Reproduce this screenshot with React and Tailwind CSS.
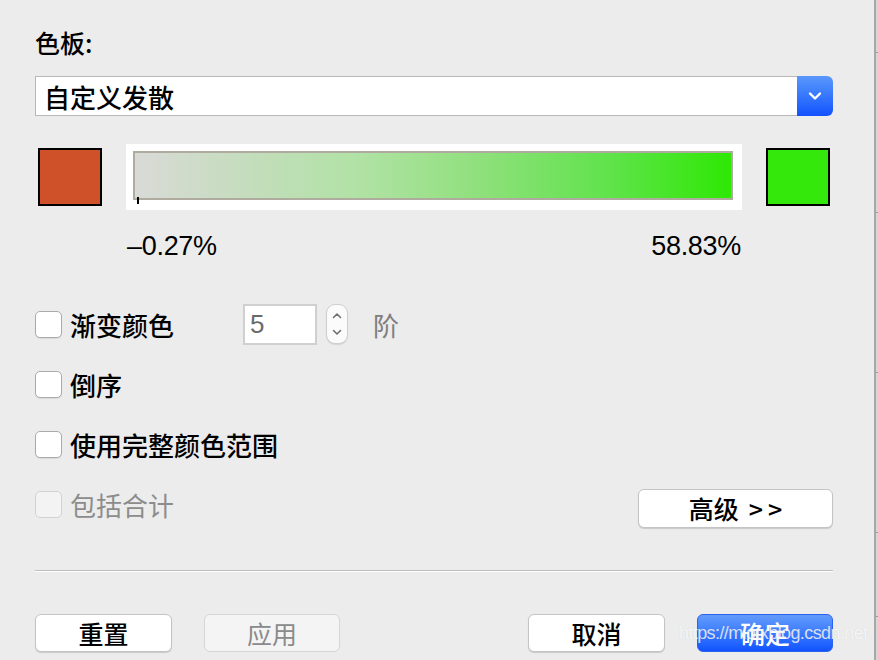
import React from "react";

const cjk = { fontFamily: '"Noto Sans CJK SC", "Noto Sans", sans-serif' };
const latin = { fontFamily: '"Liberation Sans", Arial, sans-serif' };

function Check({ disabled }) {
  return (
    <div
      className={
        "w-[27px] h-[27px] rounded-[5px] border shrink-0 " +
        (disabled
          ? "bg-[#f3f3f3] border-[#d2d2d2]"
          : "bg-white border-[#ababab] shadow-[0_1px_1px_rgba(0,0,0,0.08)]")
      }
    />
  );
}

function Btn({ children, variant }) {
  const base =
    "h-[38px] rounded-[6px] flex items-center justify-center text-[25px] leading-none ";
  let cls = "";
  if (variant === "primary")
    cls =
      "w-[136px] bg-gradient-to-b from-[#639bfb] to-[#1252ff] text-white border border-[#2b62f0] font-medium";
  else if (variant === "disabled")
    cls =
      "w-[136px] bg-[#f4f4f4] text-[#8a8a8a] border border-[#d6d6d6]";
  else
    cls =
      "w-[137px] bg-white text-black border border-[#c4c4c4] shadow-[0_1px_1px_rgba(0,0,0,0.15)] font-medium";
  return (
    <div className={base + cls} style={cjk}>
      {children}
    </div>
  );
}

export default function App() {
  return (
    <div className="w-[878px] h-[660px] flex bg-[#ececec] overflow-hidden relative">
      <div className="flex-1 flex flex-col px-[35px] pr-[41px]" style={cjk}>
        {/* Label */}
        <div className="mt-[27px] h-[30px] leading-[30px] text-[25px] text-black font-medium">
          色板:
        </div>

        {/* Select */}
        <div className="mt-[19px] h-[40px] flex">
          <div className="flex-1 bg-white border-y border-l border-[#b8b8b8] flex items-center pl-[8px] text-[26px] text-black font-medium">
            自定义发散
          </div>
          <div className="w-[36px] h-[40px] rounded-r-[6px] bg-gradient-to-b from-[#5a97fb] to-[#1450ff] flex items-center justify-center">
            <svg width="14" height="10" viewBox="0 0 14 10">
              <polyline
                points="2,2.5 7,7.5 12,2.5"
                fill="none"
                stroke="white"
                strokeWidth="2.4"
                strokeLinecap="round"
                strokeLinejoin="round"
              />
            </svg>
          </div>
        </div>

        {/* Color bar row */}
        <div className="mt-[28px] h-[66px] flex items-center">
          <div className="ml-[3px] w-[64px] h-[58px] bg-[#cf512a] border-2 border-black" />
          <div className="ml-[24px] w-[616px] h-[66px] bg-white pt-[7px] pl-[7px] relative">
            <div className="w-[600px] h-[49px] border-2 border-[#b0ab9f] bg-[linear-gradient(to_right,#d9dad7_0%,#c3ddbb_20%,#b0e2a4_38%,#8fe07c_58%,#5fe34a_80%,#2ee804_100%)]" />
            <div className="absolute left-[11px] top-[53px] w-[2px] h-[7px] bg-black" />
          </div>
          <div className="ml-[24px] w-[64px] h-[58px] bg-[#33e80a] border-2 border-black" />
        </div>

        {/* Percent labels */}
        <div
          className="mt-[20px] h-[32px] ml-[92px] w-[614px] flex justify-between items-center text-[27px] text-black tracking-[-0.3px]"
          style={latin}
        >
          <span>–0.27%</span>
          <span>58.83%</span>
        </div>

        {/* Checkbox rows */}
        <div className="mt-[42px] h-[40px] flex items-center">
          <Check />
          <div className="ml-[8px] w-[173px] text-[26px] text-black font-medium">渐变颜色</div>
          <div className="w-[74px] h-[41px] bg-white border-2 border-[#d0d0d0] flex items-center pl-[5px] text-[26px] text-[#6a6a6a]" style={latin}>
            5
          </div>
          <div className="ml-[9px] w-[22px] h-[40px] rounded-[9px] bg-[#fbfbfb] border border-[#cfcfcf] shadow-[0_1px_1px_rgba(0,0,0,0.1)] flex flex-col items-center justify-between py-[7px]">
            <svg width="10" height="7" viewBox="0 0 10 7">
              <polyline points="1.5,5.5 5,2 8.5,5.5" fill="none" stroke="#6f6f6f" strokeWidth="1.6" strokeLinecap="round" strokeLinejoin="round" />
            </svg>
            <svg width="10" height="7" viewBox="0 0 10 7">
              <polyline points="1.5,1.5 5,5 8.5,1.5" fill="none" stroke="#6f6f6f" strokeWidth="1.6" strokeLinecap="round" strokeLinejoin="round" />
            </svg>
          </div>
          <div className="ml-[25px] text-[26px] text-[#7f7f7f]">阶</div>
        </div>

        <div className="mt-[20px] h-[40px] flex items-center">
          <Check />
          <div className="ml-[8px] text-[26px] text-black font-medium">倒序</div>
        </div>

        <div className="mt-[20px] h-[40px] flex items-center">
          <Check />
          <div className="ml-[8px] text-[26px] text-black font-medium">使用完整颜色范围</div>
        </div>

        <div className="mt-[20px] h-[40px] flex items-start justify-between">
          <div className="h-[40px] flex items-center">
            <Check disabled />
            <div className="ml-[8px] text-[26px] text-[#8c8c8c]">包括合计</div>
          </div>
          <div className="mt-[5px] w-[195px] h-[39px] rounded-[6px] bg-white border border-[#c4c4c4] shadow-[0_1px_1px_rgba(0,0,0,0.15)] flex items-center justify-center text-[25px] text-black font-medium">
            <span>高级</span>
            <span className="ml-[10px] tracking-[5px] mr-[-5px]">&gt;&gt;</span>
          </div>
        </div>

        {/* Separator */}
        <div className="mt-[46px] border-t border-[#bdbdbd]" />
        <div className="border-t border-white" />

        {/* Bottom buttons */}
        <div className="mt-[42px] flex justify-between">
          <div className="flex gap-[32px]">
            <Btn>重置</Btn>
            <Btn variant="disabled">应用</Btn>
          </div>
          <div className="flex gap-[32px]">
            <Btn>取消</Btn>
            <Btn variant="primary">确定</Btn>
          </div>
        </div>
      </div>

      {/* Right window edge */}
      <div className="w-[4px] h-full border-l-2 border-[#a8a8a8] bg-[#d6d6d6] relative">
        <div className="absolute left-0 top-[52px] w-[4px] h-[1px] bg-[#9a9a9a]" />
        <div className="absolute left-0 top-[212px] w-[4px] h-[1px] bg-[#9a9a9a]" />
        <div className="absolute left-0 top-[372px] w-[4px] h-[1px] bg-[#9a9a9a]" />
        <div className="absolute left-0 top-[532px] w-[4px] h-[1px] bg-[#9a9a9a]" />
        <div className="absolute left-0 top-[616px] w-[4px] h-[1px] bg-[#9a9a9a]" />
      </div>

      {/* Watermark */}
      <div
        className="absolute left-[679px] top-[624px] text-[18px] text-white/80 tracking-[-0.6px] leading-none"
        style={{ ...latin, textShadow: "0 0 1px rgba(0,0,0,0.15)" }}
      >
        https://mlotxblog.csdn.net
      </div>
    </div>
  );
}
